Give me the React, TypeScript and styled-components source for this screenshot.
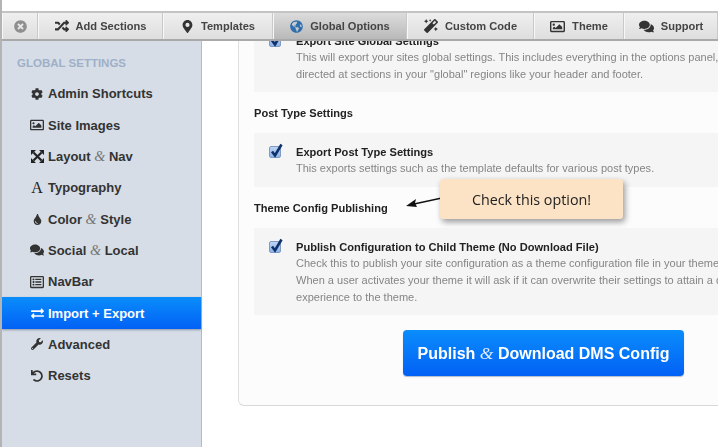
import { ReactNode } from "react";
import styled, { createGlobalStyle } from "styled-components";
import {
    FaCog,
    FaComments,
    FaExchangeAlt,
    FaGlobeAmericas,
    FaMagic,
    FaMapMarkerAlt,
    FaRandom,
    FaRegImage,
    FaRegListAlt,
    FaTimesCircle,
    FaTint,
    FaUndo,
    FaWrench,
} from "react-icons/fa";

const GlobalStyle = createGlobalStyle`
    html, body {
        margin: 0;
        padding: 0;
        background: #fff;
    }
    body {
        font-family: "Liberation Sans", Arial, sans-serif;
    }
`;

const Page = styled.div`
    width: 718px;
    height: 447px;
    overflow: hidden;
    box-sizing: border-box;
    padding-top: 11px;
    border-left: 2px solid #b4b4b4;
    display: flex;
    flex-direction: column;
    filter: blur(0.3px);
`;

const Toolbar = styled.div`
    height: 30px;
    flex: none;
    display: flex;
    position: relative;
    z-index: 2;
    box-sizing: border-box;
    border-top: 2px solid #c4c4c4;
    border-bottom: 2px solid #a9a9a9;
    background: linear-gradient(#efefef, #dedede);
`;

const Tab = styled.div<{ $width: number; $active?: boolean; $iconColor?: string }>`
    width: ${(props) => props.$width}px;
    flex: none;
    box-sizing: border-box;
    display: flex;
    align-items: center;
    justify-content: center;
    gap: 7px;
    border-right: 1px solid #c9c9c9;
    border-left: 1px solid #f7f7f7;
    font-size: 11.1px;
    font-weight: 700;
    color: #444;
    background: ${(props) =>
        props.$active ? "linear-gradient(#dcdcdc, #b9b9b9)" : "transparent"};
    svg {
        flex: none;
        color: ${(props) => props.$iconColor ?? "#333"};
    }
`;

const Body = styled.div`
    flex: 1;
    min-height: 0;
    display: flex;
`;

const Sidebar = styled.nav`
    width: 200px;
    flex: none;
    box-sizing: border-box;
    background: #d6dde6;
    border-right: 1px solid #a9bdd6;
    padding-top: 14px;
`;

const SidebarTitle = styled.div`
    padding-left: 15px;
    font-size: 11.5px;
    font-weight: 700;
    color: #9eb0c8;
    line-height: 16px;
    margin-bottom: 7px;
`;

const NavItem = styled.div<{ $active?: boolean }>`
    height: 31.35px;
    box-sizing: border-box;
    display: flex;
    align-items: center;
    padding-left: 28px;
    gap: 4px;
    font-size: 13px;
    font-weight: 700;
    color: ${(props) => (props.$active ? "#fff" : "#333")};
    background: ${(props) =>
        props.$active ? "linear-gradient(#0a8dfb, #0261f5)" : "transparent"};
    box-shadow: ${(props) =>
        props.$active ? "0 1px 2px rgba(60, 80, 110, 0.5)" : "none"};
`;

const NavIcon = styled.span`
    width: 14px;
    flex: none;
    display: flex;
    align-items: center;
    justify-content: center;
`;

const TypeGlyph = styled.span`
    font-family: "Liberation Serif", "Times New Roman", serif;
    font-size: 16px;
    font-weight: 400;
    line-height: 1;
    color: #222;
`;

const Amp = styled.span<{ $light?: boolean }>`
    font-family: "Liberation Serif", "Times New Roman", serif;
    font-style: italic;
    font-weight: 400;
    font-size: 1.1em;
    color: ${(props) => (props.$light ? "#e2eeff" : "#777")};
`;

const Main = styled.main`
    flex: 1;
    min-width: 0;
    position: relative;
    overflow: hidden;
    padding-left: 36px;
`;

const Panel = styled.section`
    width: 520px;
    height: 386px;
    margin-top: -21px;
    box-sizing: border-box;
    background: #fcfcfc;
    border-left: 1px solid #dedede;
    border-bottom: 1px solid #d8d8d8;
    border-bottom-left-radius: 6px;
    padding-left: 15px;
`;

const OptionBox = styled.div<{ $height: number }>`
    height: ${(props) => props.$height}px;
    box-sizing: border-box;
    background: #f5f5f5;
    display: flex;
    padding: 11.5px 0 0 15px;
    gap: 15px;
`;

const TopBox = styled(OptionBox)`
    padding-top: 14px;
`;

const Checkbox = styled.span`
    width: 12px;
    height: 12px;
    flex: none;
    margin-top: 1px;
    box-sizing: border-box;
    position: relative;
    border: 1px solid #7f9bc4;
    border-radius: 2px;
    background: linear-gradient(#bcd4f2, #8db4e8);
    svg {
        position: absolute;
        left: -1px;
        top: -4px;
    }
`;

const OptionText = styled.div`
    white-space: nowrap;
`;

const OptionTitle = styled.div`
    font-size: 11.1px;
    font-weight: 700;
    color: #222;
    line-height: 15px;
`;

const OptionDesc = styled.div`
    font-size: 11.03px;
    color: #858585;
    line-height: 17px;
`;

const SectionHeading = styled.h4<{ $height: number }>`
    height: ${(props) => props.$height}px;
    margin: 0;
    display: flex;
    align-items: center;
    font-size: 11.1px;
    font-weight: 700;
    color: #222;
`;

const PublishButton = styled.button`
    display: block;
    width: 281px;
    height: 46px;
    margin: 15px 0 0 149px;
    border: 0;
    border-radius: 4px;
    padding: 0;
    background: linear-gradient(#0a8dfb, #0261f5);
    box-shadow: 0 1px 1px rgba(60, 90, 140, 0.4);
    color: #fff;
    font-family: inherit;
    font-size: 16px;
    font-weight: 700;
`;

const Callout = styled.div`
    position: absolute;
    left: 238px;
    top: 138px;
    width: 183px;
    height: 40px;
    display: flex;
    align-items: center;
    justify-content: center;
    border-radius: 3px;
    background: #fde3c5;
    box-shadow: 2px 3px 6px rgba(0, 0, 0, 0.4);
    font-family: "Open Sans", sans-serif;
    font-size: 14.3px;
    color: #222;
`;

const CalloutArrow = styled.svg`
    position: absolute;
    left: 204px;
    top: 155px;
`;

const CheckMark = () => (
    <svg width="15" height="16" viewBox="0 0 15 16">
        <path
            d="M3 8.5l3 4 6.5-11"
            fill="none"
            stroke="#10306b"
            strokeWidth="2.6"
        />
    </svg>
);

const MoveIcon = () => (
    <svg width="13" height="13" viewBox="0 0 13 13">
        <path
            d="M2.5 2.5l8 8M10.5 2.5l-8 8"
            fill="none"
            stroke="#222"
            strokeWidth="2.2"
        />
        <path
            d="M0 0h5L0 5zM13 0H8l5 5zM0 13h5L0 8zM13 13H8l5-5z"
            fill="#222"
        />
    </svg>
);

const And = ({ light }: { light?: boolean }) => <Amp $light={light}>&amp;</Amp>;

type NavEntry = { icon: ReactNode; label: ReactNode; active?: boolean };

const navItems: NavEntry[] = [
    { icon: <FaCog size={12} />, label: "Admin Shortcuts" },
    { icon: <FaRegImage size={14} />, label: "Site Images" },
    {
        icon: <MoveIcon />,
        label: (
            <span>
                Layout <And /> Nav
            </span>
        ),
    },
    { icon: <TypeGlyph>A</TypeGlyph>, label: "Typography" },
    {
        icon: <FaTint size={11} />,
        label: (
            <span>
                Color <And /> Style
            </span>
        ),
    },
    {
        icon: <FaComments size={14} />,
        label: (
            <span>
                Social <And /> Local
            </span>
        ),
    },
    { icon: <FaRegListAlt size={14} />, label: "NavBar" },
    { icon: <FaExchangeAlt size={13} />, label: "Import + Export", active: true },
    { icon: <FaWrench size={12} />, label: "Advanced" },
    { icon: <FaUndo size={12} />, label: "Resets" },
];

export default function App() {
    return (
        <>
            <GlobalStyle />
            <Page>
                <Toolbar>
                    <Tab $width={36} $iconColor="#8f8f8f">
                        <FaTimesCircle size={13} />
                    </Tab>
                    <Tab $width={125}>
                        <FaRandom size={14} />
                        Add Sections
                    </Tab>
                    <Tab $width={110}>
                        <FaMapMarkerAlt size={13} />
                        Templates
                    </Tab>
                    <Tab $width={134} $active $iconColor="#2f6fb0">
                        <FaGlobeAmericas size={13} />
                        Global Options
                    </Tab>
                    <Tab $width={127}>
                        <FaMagic size={14} />
                        Custom Code
                    </Tab>
                    <Tab $width={90}>
                        <FaRegImage size={15} />
                        Theme
                    </Tab>
                    <Tab $width={94}>
                        <FaComments size={15} />
                        Support
                    </Tab>
                </Toolbar>
                <Body>
                    <Sidebar>
                        <SidebarTitle>GLOBAL SETTINGS</SidebarTitle>
                        {navItems.map((item, index) => (
                            <NavItem key={index} $active={item.active}>
                                <NavIcon>{item.icon}</NavIcon>
                                {item.label}
                            </NavItem>
                        ))}
                    </Sidebar>
                    <Main>
                        <Panel>
                            <TopBox $height={72}>
                                <Checkbox>
                                    <CheckMark />
                                </Checkbox>
                                <OptionText>
                                    <OptionTitle>Export Site Global Settings</OptionTitle>
                                    <OptionDesc>
                                        This will export your sites global settings. This includes
                                        everything in the options panel, plus
                                        <br />
                                        directed at sections in your "global" regions like your
                                        header and footer.
                                    </OptionDesc>
                                </OptionText>
                            </TopBox>
                            <SectionHeading $height={41}>Post Type Settings</SectionHeading>
                            <OptionBox $height={54}>
                                <Checkbox>
                                    <CheckMark />
                                </Checkbox>
                                <OptionText>
                                    <OptionTitle>Export Post Type Settings</OptionTitle>
                                    <OptionDesc>
                                        This exports settings such as the template defaults for
                                        various post types.
                                    </OptionDesc>
                                </OptionText>
                            </OptionBox>
                            <SectionHeading $height={41}>Theme Config Publishing</SectionHeading>
                            <OptionBox $height={87}>
                                <Checkbox>
                                    <CheckMark />
                                </Checkbox>
                                <OptionText>
                                    <OptionTitle>
                                        Publish Configuration to Child Theme (No Download File)
                                    </OptionTitle>
                                    <OptionDesc>
                                        Check this to publish your site configuration as a theme
                                        configuration file in your theme's folder.
                                        <br />
                                        When a user activates your theme it will ask if it can
                                        overwrite their settings to attain a desired
                                        <br />
                                        experience to the theme.
                                    </OptionDesc>
                                </OptionText>
                            </OptionBox>
                            <PublishButton>
                                Publish <And light /> Download DMS Config
                            </PublishButton>
                        </Panel>
                        <CalloutArrow width="36" height="14" viewBox="0 0 36 14">
                            <path d="M36 2L8 8" stroke="#111" strokeWidth="1.5" fill="none" />
                            <path d="M0 10l10-7-1 4 2 4z" fill="#111" />
                        </CalloutArrow>
                        <Callout>Check this option!</Callout>
                    </Main>
                </Body>
            </Page>
        </>
    );
}
